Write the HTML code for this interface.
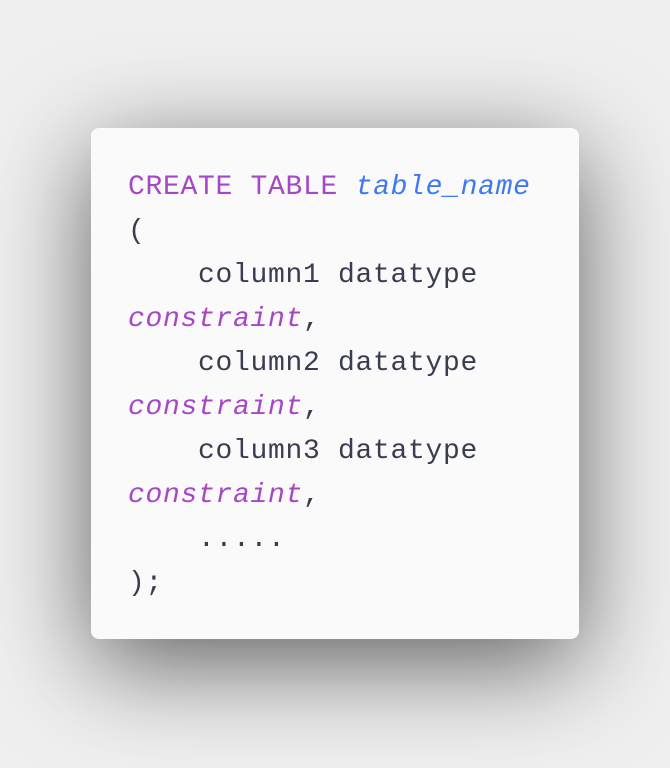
<!DOCTYPE html>
<html><head><style>
html,body{margin:0;padding:0}
body{width:670px;height:768px;background:#efefef;position:relative;overflow:hidden}
.card{position:absolute;left:91px;top:128px;width:488px;height:511px;background:#fafafa;border-radius:8px;box-shadow:0 25px 100px rgba(0,0,0,0.6)}
pre{margin:0;position:absolute;left:37px;top:38px;font-family:"Liberation Mono",monospace;font-size:28px;letter-spacing:0.7px;line-height:44px;color:#3a3d4f}
.k{color:#a647c6}.b{color:#4078f2;font-style:italic}.i{color:#a647c6;font-style:italic}
</style></head><body>
<div class="card"><pre><span class="k">CREATE TABLE</span> <span class="b">table_name</span>
(
    column1 datatype
<span class="i">constraint</span>,
    column2 datatype
<span class="i">constraint</span>,
    column3 datatype
<span class="i">constraint</span>,
    .....
);</pre></div>
</body></html>
